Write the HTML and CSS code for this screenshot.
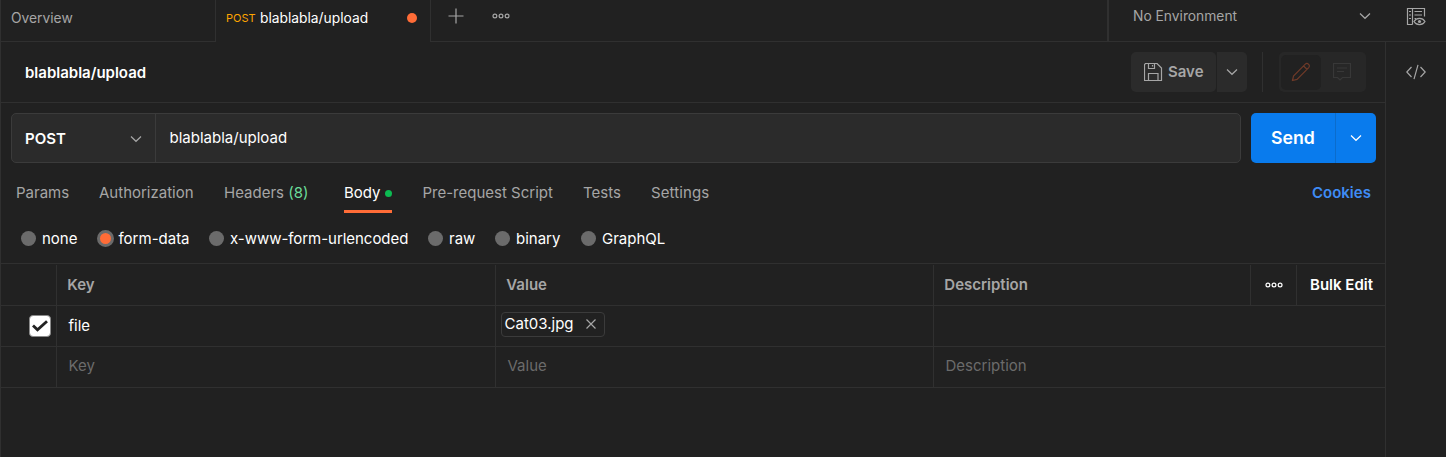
FILE: index.html
```html
<!DOCTYPE html>
<html lang="en">
<head>
<meta charset="utf-8">
<title>blablabla/upload</title>
<link rel="stylesheet" href="styles.css">
</head>
<body>
<div class="app">
  <header class="topbar">
    <div class="tab tab-overview"><span class="t-overview">Overview</span></div>
    <div class="tab tab-active"><span class="method-tag">POST</span><span class="tab-title">blablabla/upload</span><i class="unsaved"></i></div>
    <div class="tab-tools">
      <svg class="plus" width="16" height="16" viewBox="0 0 16 16"><path d="M8 0.500V15.500M0.500 8H15.500"/></svg>
      <svg class="dots" width="18" height="6" viewBox="0 0 18 6"><circle cx="2.900" cy="3" r="1.900"/><circle cx="9" cy="3" r="1.900"/><circle cx="15.100" cy="3" r="1.900"/></svg>
    </div>
    <div class="environment"><span class="t-env">No Environment</span><svg class="chev" width="12" height="8" viewBox="0 0 12 8"><path d="M1 1.500L6 6.300L11 1.500"/></svg></div>
    <div class="quick-look">
      <svg width="20" height="20" viewBox="0 0 20 20"><path d="M6.500 17.500H1.500V1.500H18.500V9.500M6.500 1.500V17.500M3 4.500H5M3 8H5M3 11.500H5M8.500 4.500H16M8.500 8H16M8.500 11.500H10M8 14.500C10.500 10.300 16.500 10.300 19 14.500C16.500 18.800 10.500 18.800 8 14.500Z"/><circle class="pupil" cx="13.500" cy="14.500" r="1.600"/></svg>
    </div>
  </header>

  <div class="workspace">
    <main class="request">
      <section class="title-row">
        <h1>blablabla/upload</h1>
        <div class="save-group">
          <button class="save"><svg width="19" height="19" viewBox="0 0 19 19"><path d="M1.500 0.500H13L17.500 5V17.500H0.500V1.500ZM4.500 0.500V5.500H10.500V0.500M8.500 2V3.500M4.500 17.500V10.500H14V17.500"/></svg><span>Save</span></button>
          <button class="save-more"><svg class="chev" width="12" height="8" viewBox="0 0 12 8"><path d="M1 1.500L6 6.300L11 1.500"/></svg></button>
        </div>
        <i class="separator"></i>
        <div class="mode">
          <span class="mode-edit"><svg width="20" height="20" viewBox="0 0 20 20"><path d="M1.500 18.500L2.500 14L14.300 2.200C15.400 1.100 16.500 1.200 17.500 2.300C18.600 3.300 18.700 4.500 17.700 5.600L6 17.400ZM12.600 4L16 7.300"/></svg></span>
          <span class="mode-comment"><svg width="18" height="18" viewBox="0 0 18 18"><path d="M0.500 0.500H17.500V14.500H9.500L7 17L4.500 14.500H0.500ZM4 5H14M4 8.500H11"/></svg></span>
        </div>
      </section>

      <section class="url-row">
        <div class="url-box">
          <div class="method"><span>POST</span><svg class="chev" width="12" height="8" viewBox="0 0 12 8"><path d="M1 1.500L6 6.300L11 1.500"/></svg></div>
          <div class="url"><span>blablabla/upload</span></div>
        </div>
        <div class="send-group">
          <button class="send"><span>Send</span></button>
          <button class="send-more"><svg class="chev" width="12" height="8" viewBox="0 0 12 8"><path d="M1 1.500L6 6.300L11 1.500"/></svg></button>
        </div>
      </section>

      <nav class="sections">
        <a class="s-params">Params</a>
        <a class="s-auth">Authorization</a>
        <a class="s-headers">Headers <b>(8)</b></a>
        <a class="s-body">Body<i></i></a>
        <a class="s-pre">Pre-request Script</a>
        <a class="s-tests">Tests</a>
        <a class="s-settings">Settings</a>
        <a class="cookies">Cookies</a>
      </nav>

      <div class="body-types">
        <label class="r-none"><i></i><span>none</span></label>
        <label class="r-form selected"><i></i><span>form-data</span></label>
        <label class="r-url"><i></i><span>x-www-form-urlencoded</span></label>
        <label class="r-raw"><i></i><span>raw</span></label>
        <label class="r-binary"><i></i><span>binary</span></label>
        <label class="r-graph"><i></i><span>GraphQL</span></label>
      </div>

      <div class="table">
        <div class="row head">
          <div></div><div><span>Key</span></div><div><span>Value</span></div><div><span>Description</span></div>
          <div class="more"><svg class="dots" width="18" height="6" viewBox="0 0 18 6"><circle cx="2.900" cy="3" r="1.900"/><circle cx="9" cy="3" r="1.900"/><circle cx="15.100" cy="3" r="1.900"/></svg></div>
          <div class="bulk"><span>Bulk Edit</span></div>
        </div>
        <div class="row entry">
          <div class="check-cell"><i class="checkbox"><svg width="16" height="12" viewBox="0 0 16 12"><path d="M1 5.500L5.500 9.800L15 1.200"/></svg></i></div>
          <div><span>file</span></div>
          <div class="file-cell"><div class="chip"><span>Cat03.jpg</span><svg width="10" height="10" viewBox="0 0 10 10"><path d="M0.500 0.500L9.500 9.500M9.500 0.500L0.500 9.500"/></svg></div></div>
          <div></div>
        </div>
        <div class="row entry blank">
          <div></div><div><span>Key</span></div><div><span>Value</span></div><div><span>Description</span></div>
        </div>
      </div>
    </main>
    <aside class="rail"><svg width="20" height="16" viewBox="0 0 20 16"><path d="M5.500 3L0.800 8L5.500 13M14.500 3L19.200 8L14.500 13M12 0.800L8 15.200"/></svg></aside>
  </div>
</div>
</body>
</html>
```
FILE: styles.css
```css
* { box-sizing: border-box; }
body {
  margin: 0;
  background: #212121;
  color: #fff;
  font: 15px/20px Inter, "Liberation Sans", sans-serif;
}
button { border: 0; padding: 0; margin: 0; font: inherit; color: inherit; }
svg { display: block; flex: none; fill: none; stroke: #a6a6a6; stroke-width: 1.2; }
span { white-space: nowrap; }
.app { height: 457px; display: flex; flex-direction: column; border-left: 1px solid #303030; overflow: hidden; }

.topbar { display: flex; height: 42px; flex: none; }
.tab { display: flex; height: 42px; padding-bottom: 5px; align-items: center; border-right: 1px solid #303030; font-size: 13.800px; }
.tab-overview { width: 215px; padding-left: 10px; border-bottom: 1px solid #303030; color: #a6a6a6; }
.tab-active { width: 215px; padding: 0 0 6px 10px; }
.method-tag { width: 34px; font-size: 11px; color: #ffa400; }
.tab-title { width: 147px; }
.unsaved { width: 10px; height: 10px; border-radius: 50%; background: #ff6c37; }
.tab-tools { flex: 1; display: flex; align-items: center; gap: 28px; padding: 0 0 9px 17px; border-bottom: 1px solid #303030; }
.environment { width: 278px; display: flex; justify-content: space-between; align-items: center; padding: 0 14px 9px 24px; border-left: 2px solid #303030; border-bottom: 1px solid #303030; font-size: 13.800px; color: #a6a6a6; }
.quick-look { width: 61px; padding: 7px 0 0 21px; border-bottom: 1px solid #303030; }
.pupil { fill: #a6a6a6; stroke: none; }

.workspace { flex: 1; display: flex; }
.request { width: 1385px; border-right: 1px solid #303030; }
.rail { flex: 1; padding: 22px 0 0 20px; }

.title-row { height: 61px; display: flex; align-items: center; padding: 0 19px 0 24px; border-bottom: 1px solid #303030; }
h1 { flex: 1; margin: 0; padding-top: 2px; font-size: 15px; font-weight: 600; line-height: 20px; }
.save-group { display: flex; gap: 1px; }
.save { width: 85px; height: 40px; display: flex; align-items: center; gap: 5px; padding-left: 13px; border-radius: 5px; background: #2b2b2b; color: #a6a6a6; font-weight: 600; }
.save-more { width: 30px; height: 40px; display: grid; place-items: center; border-radius: 0 5px 5px 0; background: #2b2b2b; }
.separator { width: 1px; height: 40px; margin: 0 16px 0 15px; background: #303030; }
.mode { width: 87px; height: 40px; display: flex; align-items: center; padding: 0 2px; border-radius: 5px; background: #272727; }
.mode-edit, .mode-comment { width: 40px; height: 35px; display: grid; place-items: center; border-radius: 5px; }
.mode-edit { background: #212121; }
.mode-edit svg { stroke: #6f3a28; }
.mode-comment svg { stroke: #383838; margin-left: 2px; }

.url-row { display: flex; gap: 10px; padding: 10px 9px 0 10px; height: 60px; }
.url-box { width: 1230px; height: 50px; display: flex; border: 1px solid #3b3b3b; border-radius: 5px; background: #2b2b2b; }
.method { width: 144px; display: flex; align-items: center; justify-content: space-between; padding: 2px 13px 0 13px; border-right: 1px solid #3b3b3b; font-weight: 600; }
.url { display: flex; align-items: center; padding-left: 13.500px; }
.send-group { display: flex; height: 50px; border-radius: 5px; overflow: hidden; }
.send { width: 84px; background: #097bed; font-size: 17.700px; font-weight: 600; }
.send-more { width: 41px; display: grid; place-items: center; background: #097bed; border-left: 1px solid #0b6ccc; }
.send-more svg { stroke: #fff; }

.sections { display: flex; height: 51px; padding: 20px 0 0 15px; color: #a6a6a6; white-space: nowrap; }
.sections a { flex: none; height: 30px; }
.s-params { width: 83px; }
.s-auth { width: 125px; }
.s-headers { width: 120px; }
.s-headers b { font-weight: 400; color: #6bdd9a; }
.sections .s-body { width: 48px; margin-right: 30.500px; display: flex; color: #fff; border-bottom: 3px solid #ff6c37; }
.s-body i { width: 7px; height: 7px; margin: 7px 0 0 auto; border-radius: 50%; background: #0cbb52; }
.s-pre { width: 160.500px; }
.s-tests { width: 68px; }
.s-settings { width: 661px; letter-spacing: 0.100px; }
.cookies { color: #3f8cf5; font-weight: 600; }

.body-types { display: flex; height: 49px; padding: 0 0 1px 20px; align-items: center; }
.body-types label { display: flex; align-items: center; flex: none; }
.body-types i { width: 15px; height: 15px; flex: none; margin-right: 6px; border-radius: 50%; background: #6b6b6b; }
.body-types span { padding-top: 1px; }
.r-none { width: 76px; }
.body-types .selected i { width: 17px; height: 17px; border: 3px solid #6b6b6b; background: #ff6c37; margin-right: 4.500px; }
.r-form { width: 112px; }
.r-url { width: 219px; letter-spacing: -0.040px; }
.r-raw { width: 67px; }
.r-binary { width: 86px; }

.table { border-top: 1px solid #303030; }
.row { display: grid; grid-template-columns: 56px 439px 438px 1fr; height: 41px; border-bottom: 1px solid #303030; }
.row > div { display: flex; align-items: center; padding-left: 11px; border-right: 1px solid #303030; }
.row > div:last-child { border-right: 0; }
.head { grid-template-columns: 56px 439px 438px 317px 46px 1fr; height: 42px; padding-top: 1px; color: #a6a6a6; font-weight: 600; }
.head > div { padding-left: 10.300px; }
.row .more { padding-left: 14px; }
.more svg, .row .bulk { stroke: #fff; color: #fff; }
.row .bulk { padding-left: 13px; }
.entry > div { padding-left: 11.500px; }
.row .check-cell { padding-left: 28px; }
.blank { color: #6b6b6b; }
.blank span { margin-top: -2px; }
.checkbox { width: 22px; height: 22px; display: grid; place-items: center; border: 1px solid #8a8a8a; border-radius: 4px; background: #fff; }
.checkbox svg { stroke: #212121; stroke-width: 2.8; }
.row .file-cell { padding: 0 0 4px 5px; }
.chip { width: 104px; height: 25px; display: flex; align-items: center; justify-content: space-between; padding: 0 8px 0 2.500px; border: 1px solid #3b3b3b; border-radius: 4px; }
```
